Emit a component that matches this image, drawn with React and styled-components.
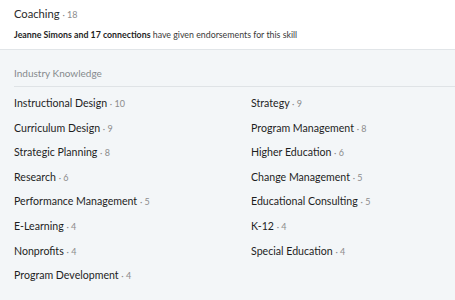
import styled, { createGlobalStyle } from 'styled-components';

const skills = [
  ['Instructional Design', 10],
  ['Strategy', 9],
  ['Curriculum Design', 9],
  ['Program Management', 8],
  ['Strategic Planning', 8],
  ['Higher Education', 6],
  ['Research', 6],
  ['Change Management', 5],
  ['Performance Management', 5],
  ['Educational Consulting', 5],
  ['E-Learning', 4],
  ['K-12', 4],
  ['Nonprofits', 4],
  ['Special Education', 4],
  ['Program Development', 4],
];

const GlobalStyle = createGlobalStyle`
  html, body {
    margin: 0;
    padding: 0;
    background: #f3f6f8;
  }
  body {
    font-family: Lato, 'Open Sans', sans-serif;
    color: #333;
  }
`;

const Page = styled.div`
  width: 455px;
  height: 300px;
  overflow: hidden;
  background: #f3f6f8;
`;

const Top = styled.div`
  background: #fff;
  padding: 6px 14px 0;
  height: 43px;
  border-bottom: 1px solid #e1e5e8;
`;

const SkillTitle = styled.div`
  font-size: 11.2px;
  line-height: 16px;
  color: #2a2a2a;
`;

const Count = styled.span`
  font-size: 9px;
  color: #8c8c8c;
  font-weight: 400;
`;

const Endorse = styled.div`
  margin-top: 6px;
  font-size: 8.8px;
  line-height: 12px;
  color: #3a3a3a;
  b {
    font-weight: 700;
    color: #1f1f1f;
  }
`;

const Section = styled.div`
  padding: 16px 0 0 14px;
`;

const SectionTitle = styled.div`
  font-size: 10px;
  line-height: 14px;
  color: #868a8d;
  padding-bottom: 6px;
  border-bottom: 1px solid #dfe3e6;
`;

const Grid = styled.div`
  display: grid;
  grid-template-columns: 237px 1fr;
  grid-auto-rows: 24.6px;
  padding-top: 8px;
`;

const Skill = styled.div`
  font-size: 10.6px;
  line-height: 16px;
  color: #1e1e1e;
  white-space: nowrap;
`;

export default function App() {
  return (
    <Page>
      <GlobalStyle />
      <Top>
        <SkillTitle>
          Coaching <Count>· 18</Count>
        </SkillTitle>
        <Endorse>
          <b>Jeanne Simons and 17 connections</b> have given endorsements for this skill
        </Endorse>
      </Top>
      <Section>
        <SectionTitle>Industry Knowledge</SectionTitle>
        <Grid>
          {skills.map(([name, n]) => (
            <Skill key={name}>
              {name} <Count>· {n}</Count>
            </Skill>
          ))}
        </Grid>
      </Section>
    </Page>
  );
}
